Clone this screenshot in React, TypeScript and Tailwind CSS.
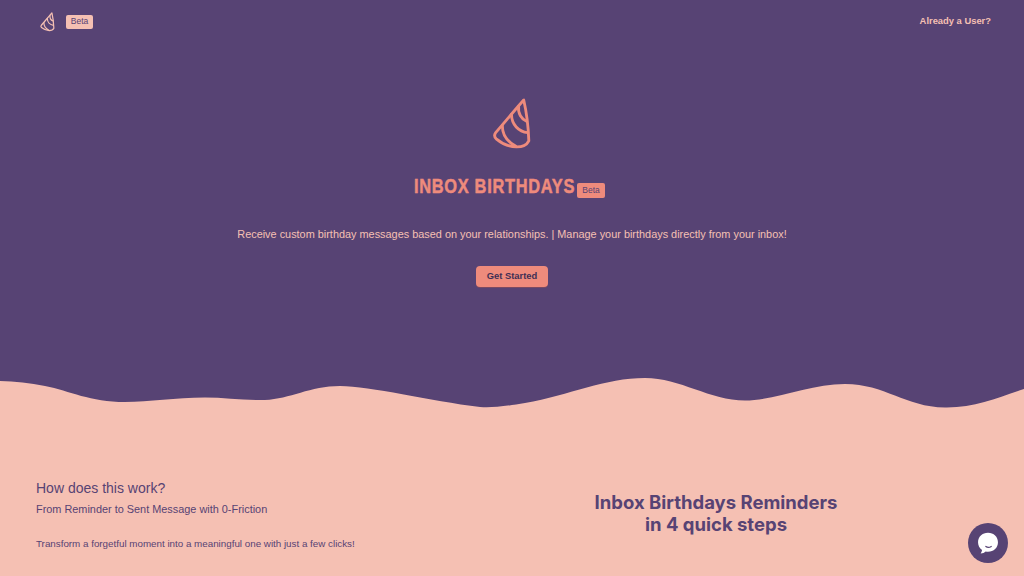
const Hat = ({ className, color, sw }: { className: string; color: string; sw: number }) => (
  <svg viewBox="8 5 39 51" className={className} fill="none" stroke={color} strokeWidth={sw} strokeLinecap="round" strokeLinejoin="round">
    <path d="M39 7 C31 16 21 28 11.5 39 C10 41 10 43 12 45 C18 50 25 53 32 53 C37 53 42 51 44 47 C43.5 33 42 20 39 7 Z" />
    <path d="M18 32 C18 41 23 48 31 52" />
    <path d="M27 21 C27 31 34 38 43 39" />
    <path d="M34 13 C33 20 37 26 42 28" />
  </svg>
);

const Wave = () => (
  <svg viewBox="0 0 1024 36" preserveAspectRatio="none" className="block w-full h-[36px] bg-[#574374]">
    <path
      fill="#f5c0b3"
      d="M0 3 C15 3.5 30 5 45 8 C70 13 90 24 125 24 C150 24 175 19.5 205 19.5 C225 19.5 245 22.5 265 22 C290 21 310 8 340 8 C370 8 430 23 480 29 C490 30 505 28.5 525 25 C570 17 605 0 645 0 C680 0 710 22.5 745 22.5 C775 22.5 810 6 845 6 C885 6 905 29 945 29.5 C975 30 1000 19 1024 11 L1024 36 L0 36 Z"
    />
  </svg>
);

export default function App() {
  return (
    <div className="relative h-[576px] w-[1024px] overflow-hidden bg-[#f5c0b3] font-['Liberation_Sans',Arial,sans-serif]">
      <section className="h-[378px] bg-[#574374]">
        <header className="flex h-[43px] items-center justify-between pl-[40px] pr-[33px]">
          <div className="flex items-center gap-[11px]">
            <Hat className="h-[20px] w-[15px]" color="#f5c0b3" sw={3.2} />
            <span className="flex h-[14px] w-[27px] items-center justify-center rounded-[2px] bg-[#f5c0b3] text-[8.5px] text-[#574374]">Beta</span>
          </div>
          <span className="text-[9.4px] font-bold text-[#f5c0b3]">Already a User?</span>
        </header>
        <div className="flex flex-col items-center">
          <Hat className="mt-[55px] h-[52px] w-[40px]" color="#ee8b7c" sw={2.8} />
          <div className="mt-[25px] flex items-end gap-[2px] pr-[5px]">
            <h1 className="scale-y-[1.2] font-['Liberation_Sans',sans-serif] text-[16.4px] font-bold leading-[22px] tracking-[0.7px] text-[#ee8b7c] [-webkit-text-stroke:0.4px_#ee8b7c]">INBOX BIRTHDAYS</h1>
            <span className="mb-[-1px] flex h-[15px] w-[28px] items-center justify-center rounded-[2px] bg-[#ee8b7c] text-[8.5px] text-[#574374]">Beta</span>
          </div>
          <p className="mt-[28px] text-[10.9px] leading-[18px] text-[#f5c0b3]">Receive custom birthday messages based on your relationships. | Manage your birthdays directly from your inbox!</p>
          <button className="mt-[23px] h-[21px] w-[72px] rounded-[4px] bg-[#ee8b7c] text-[9.4px] font-bold text-[#3f2f55] shadow-[0_1px_0_#7a4a62]">Get Started</button>
        </div>
      </section>
      <Wave />
      <section className="grid grid-cols-2 pl-[36px] pt-[64px]">
        <div className="text-[#574374]">
          <h2 className="text-[14px] leading-[20px]">How does this work?</h2>
          <p className="mt-[2px] text-[10.9px] leading-[18px]">From Reminder to Sent Message with 0-Friction</p>
          <p className="mt-[18px] text-[9.8px] leading-[16px]">Transform a forgetful moment into a meaningful one with just a few clicks!</p>
        </div>
        <h2 className="ml-[52px] mt-[13px] w-[268px] text-center font-['Inter',sans-serif] text-[18.5px] font-bold leading-[22px] text-[#574374]">
          Inbox Birthdays Reminders<br />in 4 quick steps
        </h2>
      </section>
      <button className="absolute left-[968px] top-[523px] flex h-[40px] w-[40px] items-center justify-center rounded-full bg-[#574374]">
        <svg viewBox="0 0 24 24" className="h-[26px] w-[26px]">
          <path fill="#fff" d="M12 2.5 C6.7 2.5 2.8 6.2 2.8 11.2 C2.8 14.2 4.2 16.8 6.5 18.4 C6.4 19.6 5.9 20.7 5.2 21.6 C7 21.5 8.7 20.9 9.9 19.8 C10.6 19.9 11.3 20 12 20 C17.3 20 21.2 16.2 21.2 11.2 C21.2 6.2 17.3 2.5 12 2.5 Z" />
          <path fill="none" stroke="#574374" strokeWidth="1.1" strokeLinecap="round" d="M10 15.2 C11.3 16.2 13.5 16.2 15 15.2" />
        </svg>
      </button>
    </div>
  );
}
